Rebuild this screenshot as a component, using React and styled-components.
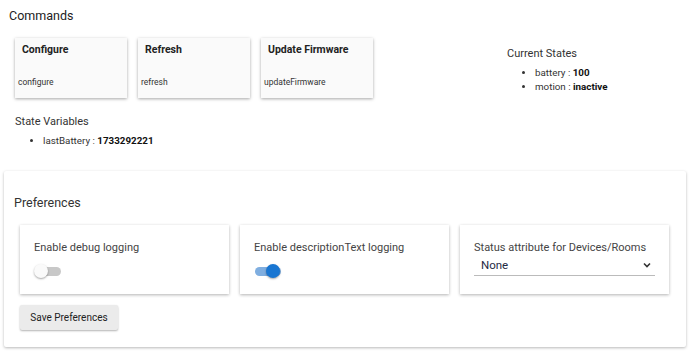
import styled, { createGlobalStyle } from "styled-components";

const GlobalStyle = createGlobalStyle`
  html, body, #root {
    margin: 0;
    padding: 0;
    background: #ffffff;
  }
  body {
    font-family: Roboto, "Liberation Sans", sans-serif;
    color: #212121;
  }
`;

const commands = [
  { title: "Configure", name: "configure" },
  { title: "Refresh", name: "refresh" },
  { title: "Update Firmware", name: "updateFirmware" },
];

const prefs = [
  { label: "Enable debug logging", type: "toggle", on: false },
  { label: "Enable descriptionText logging", type: "toggle", on: true },
  { label: "Status attribute for Devices/Rooms", type: "select", value: "None" },
];

export default function App() {
  return (
    <>
      <GlobalStyle />
      <Page>
        <TopRow>
          <LeftCol>
            <Heading>Commands</Heading>
            <CardRow>
              {commands.map((c) => (
                <CommandCard key={c.name}>
                  <CardTitle>{c.title}</CardTitle>
                  <CardName>{c.name}</CardName>
                </CommandCard>
              ))}
            </CardRow>
            <SubHeading>State Variables</SubHeading>
            <List>
              <li>
                lastBattery : <b>1733292221</b>
              </li>
            </List>
          </LeftCol>
          <RightCol>
            <SubHeading $plain>Current States</SubHeading>
            <List $states>
              <li>
                battery : <b>100</b>
              </li>
              <li>
                motion : <b>inactive</b>
              </li>
            </List>
          </RightCol>
        </TopRow>

        <Panel>
          <PanelTitle>Preferences</PanelTitle>
          <PrefGrid>
            {prefs.map((p) => (
              <PrefCard key={p.label}>
                <PrefLabel>{p.label}</PrefLabel>
                {p.type === "toggle" ? (
                  <Toggle>
                    <Track $on={p.on} />
                    <Thumb $on={p.on} />
                  </Toggle>
                ) : (
                  <Select>
                    <span>{p.value}</span>
                    <svg width="8" height="6" viewBox="0 0 8 6">
                      <path d="M1 1.5 L4 4.5 L7 1.5" fill="none" stroke="#333" strokeWidth="1.6" />
                    </svg>
                  </Select>
                )}
              </PrefCard>
            ))}
          </PrefGrid>
          <SaveButton>Save Preferences</SaveButton>
        </Panel>
      </Page>
    </>
  );
}

const Page = styled.div`
  padding: 8px 4px 10px;
`;

const TopRow = styled.div`
  display: flex;
`;

const LeftCol = styled.div`
  width: 498px;
  padding-left: 5px;
`;

const RightCol = styled.div`
  padding-top: 39px;
`;

const Heading = styled.div`
  font-size: 12.5px;
  line-height: 16px;
  color: #222;
`;

const CardRow = styled.div`
  display: flex;
  gap: 11px;
  margin: 14px 0 0 6px;
`;

const CommandCard = styled.div`
  width: 112px;
  height: 60px;
  box-sizing: border-box;
  background: #fafafa;
  box-shadow: 0 1px 3px rgba(0, 0, 0, 0.35);
  display: flex;
  flex-direction: column;
  justify-content: space-between;
  padding: 5px 3px 11px;
`;

const CardTitle = styled.div`
  font-size: 10.5px;
  font-weight: 700;
  padding-left: 4px;
  color: #222;
`;

const CardName = styled.div`
  font-size: 8.5px;
  color: #333;
`;

const SubHeading = styled.div`
  font-size: 11px;
  line-height: 14px;
  color: #333;
  margin: ${(p) => (p.$plain ? "0" : "17px 0 0 6px")};
`;

const List = styled.ul`
  margin: 5px 0 0;
  padding-left: ${(p) => (p.$states ? "28px" : "34px")};
  font-size: 9.8px;
  line-height: 14px;
  color: #333;

  b {
    color: #111;
  }
`;

const Panel = styled.div`
  margin-top: 23px;
  box-shadow: 0 1px 3px rgba(0, 0, 0, 0.28);
  border-radius: 2px;
  padding: 24px 17px 17px 16px;
`;

const PanelTitle = styled.div`
  font-size: 12.5px;
  line-height: 16px;
  color: #333;
  margin-left: -6px;
`;

const PrefGrid = styled.div`
  display: grid;
  grid-template-columns: repeat(3, 1fr);
  gap: 11px;
  margin-top: 14px;
`;

const PrefCard = styled.div`
  height: 69px;
  box-sizing: border-box;
  background: #fff;
  box-shadow: 0 1px 3px rgba(0, 0, 0, 0.3);
  padding: 16px 14px 0;
`;

const PrefLabel = styled.div`
  font-size: 11px;
  line-height: 13px;
  color: #444;
  white-space: nowrap;
`;

const Toggle = styled.div`
  position: relative;
  width: 28px;
  height: 16px;
  margin-top: 9px;
`;

const Track = styled.div`
  position: absolute;
  left: 1px;
  right: 1px;
  top: 4px;
  height: 9px;
  border-radius: 5px;
  background: ${(p) => (p.$on ? "#7faee0" : "#c8c8c8")};
`;

const Thumb = styled.div`
  position: absolute;
  top: 1px;
  left: ${(p) => (p.$on ? "12px" : "0")};
  width: 14px;
  height: 14px;
  border-radius: 50%;
  background: ${(p) => (p.$on ? "#1976d2" : "#fafafa")};
  box-shadow: 0 1px 2px rgba(0, 0, 0, 0.35);
`;

const Select = styled.div`
  display: flex;
  align-items: center;
  justify-content: space-between;
  margin-top: 4px;
  padding: 0 4px 3px 7px;
  border-bottom: 1px solid #bbb;
  font-size: 11.5px;
  line-height: 14px;
  color: #1f2a44;
`;

const SaveButton = styled.button`
  display: block;
  margin-top: 11px;
  width: 98px;
  height: 25px;
  border: none;
  border-radius: 2px;
  background: #ebebeb;
  box-shadow: 0 1px 2px rgba(0, 0, 0, 0.3);
  font-family: Roboto, "Liberation Sans", sans-serif;
  font-size: 10px;
  color: #222;
  padding: 0;
`;
